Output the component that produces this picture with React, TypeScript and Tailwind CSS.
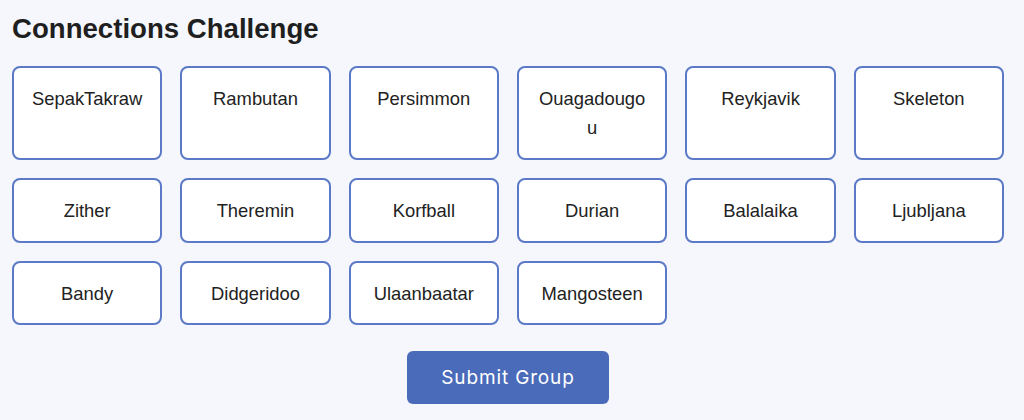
const words = [
  'SepakTakraw',
  'Rambutan',
  'Persimmon',
  'Ouagadougou',
  'Reykjavik',
  'Skeleton',
  'Zither',
  'Theremin',
  'Korfball',
  'Durian',
  'Balalaika',
  'Ljubljana',
  'Bandy',
  'Didgeridoo',
  'Ulaanbaatar',
  'Mangosteen',
]

const App = () => {
  return (
    <div className="min-h-screen w-full bg-[#f5f7fc] px-3 pt-3 pb-4 font-['Liberation_Sans',Arial,sans-serif] text-[#222]">
      <h1 className="text-[27.6px] font-bold leading-[1.2] text-[#1f1f1f]">Connections Challenge</h1>

      <div className="mt-[21px] grid w-[992px] grid-cols-6 gap-x-[18px] gap-y-[18px]">
        {words.map((w) => (
          <div
            key={w}
            className="rounded-lg border-2 border-[#5b79c6] bg-white px-4 pt-[17px] pb-[15px] text-center text-[18.4px] leading-[28.8px] break-words"
          >
            {w}
          </div>
        ))}
      </div>

      <div className="mt-[26px] flex w-[992px] justify-center">
        <button className="h-[53px] w-[202px] rounded-md bg-[#4a6bb9] text-[19px] tracking-[0.045em] font-['Inter',sans-serif] text-white">
          Submit Group
        </button>
      </div>
    </div>
  )
}

export default App
